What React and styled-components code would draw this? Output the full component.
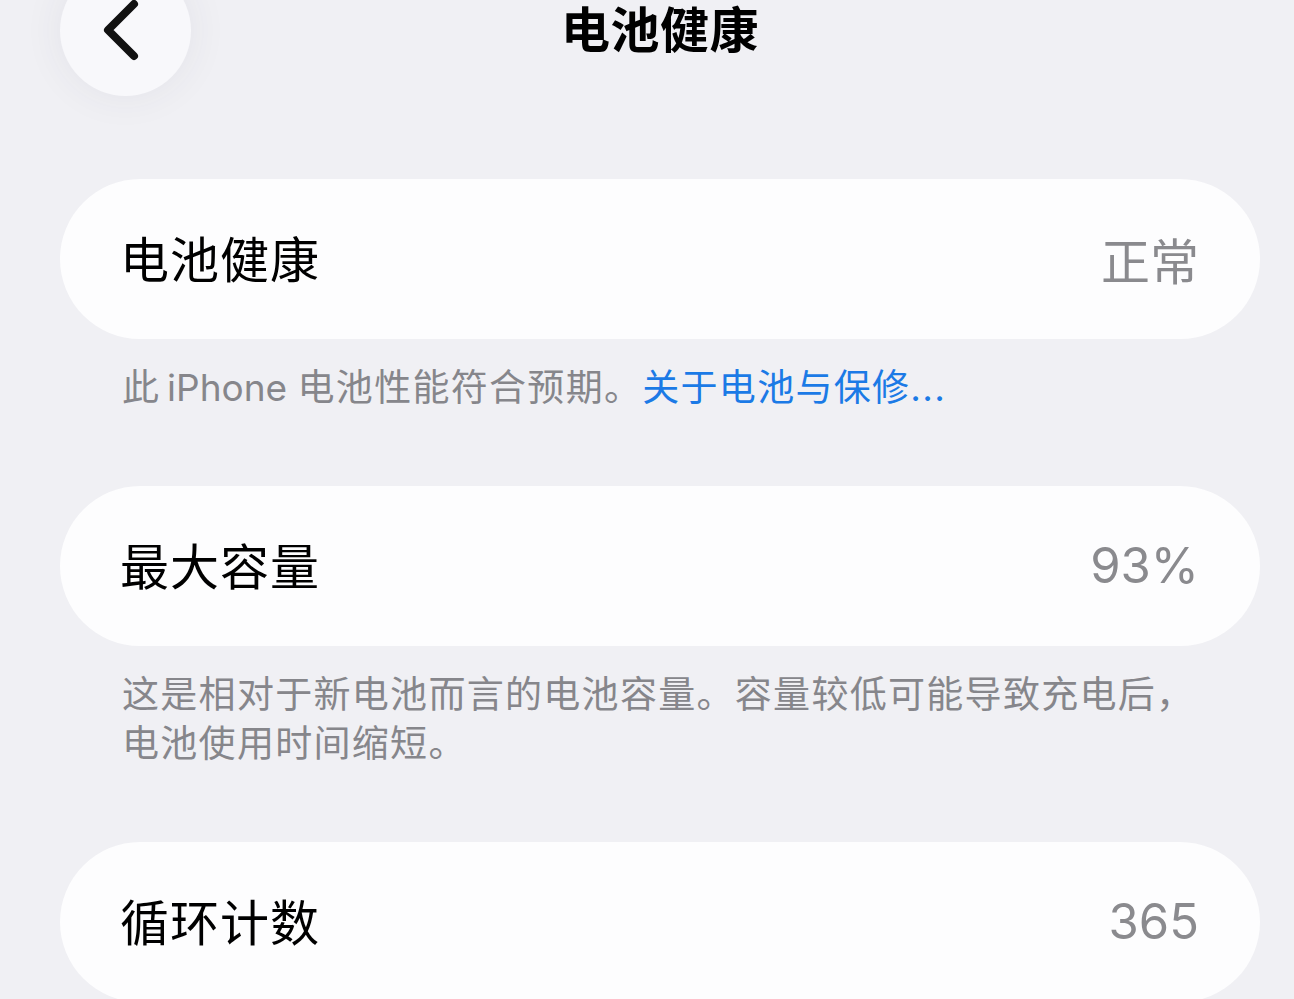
import React from "react";
import styled, { createGlobalStyle } from "styled-components";

const GlobalStyle = createGlobalStyle`
  html, body {
    margin: 0;
    padding: 0;
    background: #f0f0f4;
    overflow: hidden;
  }
  body {
    font-family: Inter, "Noto Sans CJK SC", "Noto Sans", sans-serif;
    -webkit-font-smoothing: antialiased;
  }
`;

const Page = styled.div`
  width: 1200px;
  margin-left: 60px;
  display: flex;
  flex-direction: column;
`;

const Header = styled.header`
  display: grid;
  grid-template-columns: 1fr auto 1fr;
  align-items: center;
  height: 131px;
  margin-top: -35px;
  margin-bottom: 83px;
`;

const BackButton = styled.button`
  width: 131px;
  height: 131px;
  border-radius: 50%;
  border: none;
  padding: 0 6px 0 0;
  background: #f8f8fb;
  box-shadow: 0 0 40px rgba(60, 60, 80, 0.07);
  display: flex;
  align-items: center;
  justify-content: center;
  cursor: pointer;
  justify-self: start;
`;

const Title = styled.h1`
  margin: 0;
  font-size: 49px;
  font-weight: 700;
  color: #000;
  line-height: 1;
  letter-spacing: 0.5px;
`;

const Section = styled.section`
  display: flex;
  flex-direction: column;
`;

const Card = styled.div`
  height: 160px;
  border-radius: 80px;
  background: #fdfdfe;
  display: flex;
  align-items: center;
  justify-content: space-between;
  padding: 0 61px 5px 60px;
  box-sizing: border-box;
`;

const Label = styled.span`
  font-size: 49px;
  font-weight: 400;
  letter-spacing: 1px;
  color: #000;
`;

const Value = styled.span`
  font-size: 49px;
  font-weight: 400;
  color: #8a8a8e;
  margin-top: 4px;
`;

const Footer = styled.p`
  margin: 0;
  padding: 24px 40px 74px 62px;
  font-size: 37px;
  line-height: 49px;
  letter-spacing: 1.3px;
  color: #86868b;
`;

const Latin = styled.span`
  letter-spacing: 0;
`;

const Link = styled.a`
  color: #1b7ae6;
  text-decoration: none;
`;

function Chevron() {
  return (
    <svg width="44" height="70" viewBox="0 0 44 70">
      <path
        d="M33 8 L7 34 L33 60"
        fill="none"
        stroke="#111"
        strokeWidth="8"
        strokeLinecap="round"
        strokeLinejoin="round"
      />
    </svg>
  );
}

const rows = [
  {
    label: "电池健康",
    value: "正常",
    footer: (
      <>
        此<Latin>{"\u2009iPhone "}</Latin>电池性能符合预期。<Link href="#">关于电池与保修...</Link>
      </>
    ),
  },
  {
    label: "最大容量",
    value: "93%",
    footer: "这是相对于新电池而言的电池容量。容量较低可能导致充电后，电池使用时间缩短。",
  },
  { label: "循环计数", value: "365" },
];

export default function App() {
  return (
    <>
      <GlobalStyle />
      <Page>
        <Header>
          <BackButton aria-label="返回">
            <Chevron />
          </BackButton>
          <Title>电池健康</Title>
          <div />
        </Header>
        {rows.map((r) => (
          <Section key={r.label}>
            <Card>
              <Label>{r.label}</Label>
              <Value>{r.value}</Value>
            </Card>
            {r.footer && <Footer>{r.footer}</Footer>}
          </Section>
        ))}
      </Page>
    </>
  );
}
